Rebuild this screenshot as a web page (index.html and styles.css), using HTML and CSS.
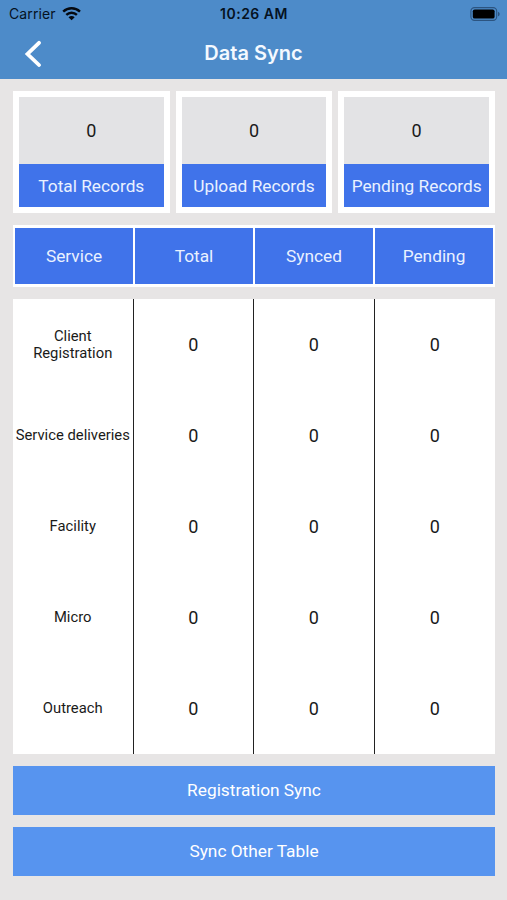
FILE: index.html
```html
<!DOCTYPE html>
<html lang="en">
<head>
    <meta charset="UTF-8">
    <meta name="viewport" content="width=device-width, initial-scale=1.0">
    <title>Data Sync</title>
    <link rel="stylesheet" href="styles.css">
</head>
<body>

    <!-- Header -->
    <header>
        <div class="status-bar">
            <div class="carrier">
                <span class="carrier-name">Carrier</span>
                <svg class="wifi" width="20" height="14" viewBox="0 0 20 14" fill="none" stroke="#05090f" stroke-width="2.4">
                    <path d="M1.2 4.6C6 .1 13.2 .1 18 4.6"/>
                    <path d="M4.3 7.9C7.3 5 11.9 5 14.9 7.9"/>
                    <path d="M9.6 13.3L6.5 10.3C8.3 8.7 10.9 8.7 12.7 10.3Z" fill="#05090f" stroke="none"/>
                </svg>
            </div>
            <span class="clock">10:26 AM</span>
            <svg class="battery" width="31" height="14" viewBox="0 0 31 14">
                <rect x=".9" y=".6" width="25.8" height="12.8" rx="3.6" fill="none" stroke="#2c5480" stroke-width="1.1"/>
                <rect x="2.8" y="2.4" width="21.8" height="9.2" rx="1.9" fill="#000"/>
                <path d="M28 4.7C30.2 5.5 30.2 8.5 28 9.3Z" fill="#2c5480"/>
            </svg>
        </div>
        <div class="nav-bar">
            <button class="back" aria-label="Back">
                <svg width="18" height="28" viewBox="0 0 18 28" fill="none" stroke="#fff" stroke-width="3.8" stroke-linecap="round">
                    <path d="M15 3.8L3.5 15L15 26"/>
                </svg>
            </button>
            <h1>Data Sync</h1>
        </div>
    </header>

    <main>
        <!-- Record totals -->
        <div class="cards">
            <div class="card">
                <div class="card-value">0</div>
                <div class="card-label">Total Records</div>
            </div>
            <div class="card">
                <div class="card-value">0</div>
                <div class="card-label">Upload Records</div>
            </div>
            <div class="card">
                <div class="card-value">0</div>
                <div class="card-label">Pending Records</div>
            </div>
        </div>

        <!-- Column titles -->
        <div class="table-head">
            <div>Service</div>
            <div>Total</div>
            <div>Synced</div>
            <div>Pending</div>
        </div>

        <!-- Services -->
        <div class="table-body">
            <div class="name">Client<br>Registration</div><div>0</div><div>0</div><div>0</div>
            <div class="name">Service deliveries</div><div>0</div><div>0</div><div>0</div>
            <div class="name">Facility</div><div>0</div><div>0</div><div>0</div>
            <div class="name">Micro</div><div>0</div><div>0</div><div>0</div>
            <div class="name">Outreach</div><div>0</div><div>0</div><div>0</div>
        </div>

        <button class="sync-button">Registration Sync</button>
        <button class="sync-button">Sync Other Table</button>
    </main>

</body>
</html>
```
FILE: styles.css
```css
* {
    box-sizing: border-box;
}

body {
    font-family: Roboto, Arial, sans-serif;
    margin: 0;
    height: 900px;
    background-color: #e7e5e5;
    color: #1a1a1a;
    font-size: 17.3px;
}

button {
    font-family: inherit;
    border: none;
    padding: 0;
}

/* Header */
header {
    height: 79px;
    background-color: #4d8bc9;
}

.status-bar {
    display: grid;
    grid-template-columns: 1fr auto 1fr;
    align-items: center;
    height: 27px;
    padding: 0 6px 0 9px;
    font-family: Inter, Arial, sans-serif;
    font-size: 14px;
    color: #05121f;
}

.carrier {
    display: flex;
    align-items: center;
    gap: 6px;
}

.carrier-name {
    letter-spacing: 0.1px;
}

.clock {
    margin-right: 2px;
    font-weight: 600;
    letter-spacing: 0.5px;
}

.battery {
    justify-self: end;
}

.nav-bar {
    display: grid;
    grid-template-columns: 60px 1fr 60px;
    align-items: center;
    height: 52px;
}

.back {
    height: 28px;
    padding-left: 24px;
    background: none;
    text-align: left;
}

.back svg {
    display: block;
}

h1 {
    margin: 0;
    font-family: Inter, Arial, sans-serif;
    font-size: 20px;
    font-weight: 600;
    text-align: center;
    color: #f4f9ff;
}

main {
    display: flex;
    flex-direction: column;
    gap: 12px;
    padding: 12px 12px 0 13px;
}

/* Record totals */
.cards {
    display: grid;
    grid-template-columns: repeat(3, 1fr);
    gap: 6px;
}

.card {
    height: 122px;
    padding: 6px;
    background-color: #fff;
}

.card-value,
.card-label {
    display: flex;
    align-items: center;
    justify-content: center;
    white-space: nowrap;
}

.card-value {
    height: 67px;
    background-color: #e3e3e5;
    font-size: 18px;
}

.card-label {
    height: 43px;
    background-color: #4073ea;
    color: #e9f1ff;
}

/* Table */
.table-head {
    display: grid;
    grid-template-columns: repeat(4, 1fr);
    gap: 2px;
    height: 62px;
    padding: 3px 2px;
    background-color: #fff;
}

.table-head div {
    display: flex;
    align-items: center;
    justify-content: center;
    background-color: #4073ea;
    color: #e9f1ff;
}

.table-body {
    display: grid;
    grid-template-columns: repeat(4, 1fr);
    grid-template-rows: repeat(5, 1fr);
    height: 455px;
    background-color: #fff;
}

.table-body div {
    display: flex;
    align-items: center;
    justify-content: center;
    text-align: center;
    font-size: 18px;
    border-right: 1px solid #222;
}

.table-body div:nth-child(4n) {
    border-right: none;
}

.table-body .name {
    font-size: 14.8px;
    line-height: 17px;
    white-space: nowrap;
}

/* Buttons */
.sync-button {
    height: 49px;
    padding-bottom: 2px;
    background-color: #5794ef;
    color: #fff;
    font-size: 17.3px;
}
```
